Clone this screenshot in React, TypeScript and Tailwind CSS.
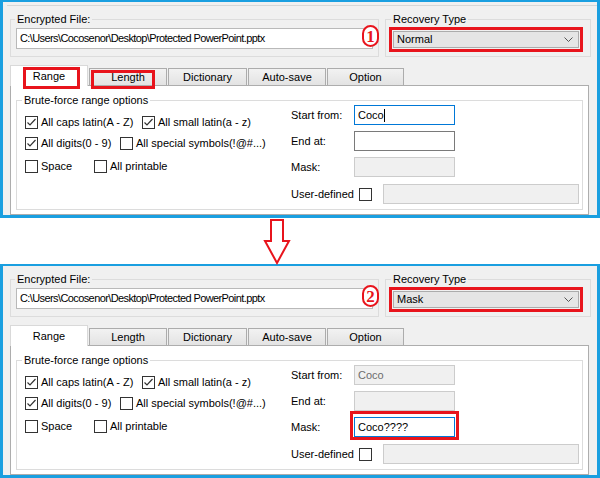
import React from 'react';

type Mode = 'normal' | 'focus' | 'disabled';

function Check({ checked }: { checked?: boolean }) {
  return (
    <span className="w-[13px] h-[13px] border border-[#333333] bg-white flex items-center justify-center shrink-0">
      {checked && (
        <svg width="11" height="11" viewBox="0 0 11 11">
          <path d="M1.5 5.5 L4 8 L9.5 2" fill="none" stroke="#333333" strokeWidth="1.2" />
        </svg>
      )}
    </span>
  );
}

function CheckItem({ label, checked, className }: { label: string; checked?: boolean; className?: string }) {
  return (
    <div className={`flex items-center gap-[3px] whitespace-nowrap ${className ?? ''}`}>
      <Check checked={checked} />
      <span>{label}</span>
    </div>
  );
}

function Field({ mode, value, caret }: { mode: Mode; value?: string; caret?: boolean }) {
  const look =
    mode === 'focus'
      ? 'border-[#0078d7] bg-white text-black'
      : mode === 'disabled'
        ? 'border-[#cccccc] bg-[#f0f0f0] text-[#6d6d6d]'
        : 'border-[#7a7a7a] bg-white text-black';
  return (
    <div className={`w-[101px] h-[20px] border flex items-center pl-[3px] ${look}`}>
      {value}
      {caret && <span className="w-px h-[13px] bg-black" />}
    </div>
  );
}

function RedBox({ className }: { className: string }) {
  return <div className={`absolute border-[3px] border-[#e8141c] pointer-events-none ${className}`} />;
}

function Tab({ label, selected, width, children }: { label: string; selected?: boolean; width: string; children?: React.ReactNode }) {
  if (selected) {
    return (
      <div className={`relative ${width} h-[21px] mb-[-1px] bg-white border-x border-t border-[#d9d9d9] flex items-center justify-center`}>
        {label}
        {children}
      </div>
    );
  }
  return (
    <div className={`relative ${width} h-[17px] ml-px bg-gradient-to-b from-[#f2f2f2] to-[#e3e3e3] border-x border-t border-[#acacac] flex items-center justify-center`}>
      {label}
      {children}
    </div>
  );
}

function Panel({ step }: { step: 1 | 2 }) {
  const first = step === 1;
  return (
    <div className={`border-x-[3px] border-t-2 border-b-[3px] border-[#1a9fe0] bg-[#f0f0f0] ${first ? 'pt-[3px]' : 'pt-[7px]'}`}>
      {first && <div className="h-px bg-[#d6d6d6] ml-[4px] mb-[7px]" />}

      <div className="flex ml-[7px] h-[44px]">
        <div className="relative">
          <fieldset className="w-[369px] h-[44px] border border-[#dcdcdc]">
            <legend className="ml-[4px] px-[2px] leading-[12px]">Encrypted File:</legend>
            <div className="ml-[5px] mt-[3px] w-[357px] h-[21px] border border-[#b9b9b9] bg-white flex items-center pl-[3px] tracking-[-0.6px]">
              {'C:\\Users\\Cocosenor\\Desktop\\Protected PowerPoint.pptx'}
            </div>
          </fieldset>
          <div className="absolute left-[352px] top-[12px] w-[17px] h-[22px] rounded-full border-2 border-[#e8141c] bg-white text-[#e8141c] font-['Liberation_Serif',serif] font-bold text-[17px] leading-none flex items-center justify-center">
            {step}
          </div>
        </div>
        <fieldset className="ml-[6px] w-[206px] h-[44px] border border-[#dcdcdc]">
          <legend className="ml-[5px] px-[2px] leading-[12px]">Recovery Type</legend>
          <div className="ml-[3px] mt-[2px] w-[194px] h-[25px] border-[3px] border-[#e8141c] p-px">
            <div className="h-full border border-[#acacac] bg-[#e5e5e5] flex items-center justify-between pl-[3px] pr-[5px]">
              <span>{first ? 'Normal' : 'Mask'}</span>
              <svg width="9" height="5" viewBox="0 0 9 5">
                <path d="M0.5 0.5 L4.5 4.5 L8.5 0.5" fill="none" stroke="#555555" strokeWidth="1" />
              </svg>
            </div>
          </div>
        </fieldset>
      </div>

      <div className="flex items-end ml-[7px] mt-[8px] h-[20px] relative z-10">
        <Tab label="Range" selected width="w-[78px]">
          {first && <RedBox className="left-[12px] top-[1px] w-[57px] h-[22px]" />}
        </Tab>
        <Tab label="Length" width="w-[78px]">
          {first && <RedBox className="left-[1px] top-[1px] w-[64px] h-[19px]" />}
        </Tab>
        <Tab label="Dictionary" width="w-[79px]" />
        <Tab label="Auto-save" width="w-[78px]" />
        <Tab label="Option" width="w-[77px]" />
      </div>

      <div className="ml-[7px] w-[579px] h-[130px] border border-[#adadad] bg-white">
        <fieldset className="ml-[5px] mt-[8px] w-[567px] h-[116px] border border-[#dcdcdc]">
          <legend className="ml-[5px] px-[2px] leading-[12px]">Brute-force range options</legend>
          <div className="flex">
            <div className="w-[274px] pl-[8px] flex flex-col">
              <div className="flex h-[13px] mt-[10px]">
                <CheckItem label="All caps latin(A - Z)" checked className="w-[117px]" />
                <CheckItem label="All small latin(a - z)" checked />
              </div>
              <div className="flex h-[13px] mt-[8px]">
                <CheckItem label="All digits(0 - 9)" checked className="w-[95px]" />
                <CheckItem label="All special symbols(!@#...)" />
              </div>
              <div className="flex h-[13px] mt-[10px]">
                <CheckItem label="Space" className="w-[69px]" />
                <CheckItem label="All printable" />
              </div>
            </div>
            <div className="flex flex-col mt-[-1px]">
              <div className="flex items-center h-[20px]">
                <span className="w-[63px]">Start from:</span>
                <Field mode={first ? 'focus' : 'disabled'} value="Coco" caret={first} />
              </div>
              <div className="flex items-center h-[20px] mt-[6px]">
                <span className="w-[63px]">End at:</span>
                <Field mode={first ? 'normal' : 'disabled'} />
              </div>
              <div className="flex items-center h-[20px] mt-[6px]">
                <span className="w-[63px]">Mask:</span>
                <div className="relative">
                  <Field mode={first ? 'disabled' : 'focus'} value={first ? '' : 'Coco????'} />
                  {!first && <RedBox className="-left-[4px] -top-[6px] w-[109px] h-[29px]" />}
                </div>
              </div>
              <div className="flex items-center h-[20px] mt-[7px]">
                <span className="w-[68px]">User-defined</span>
                <Check />
                <div className="ml-[11px] w-[196px] h-[20px] border border-[#cccccc] bg-[#f0f0f0]" />
              </div>
            </div>
          </div>
        </fieldset>
      </div>
    </div>
  );
}

export default function App() {
  return (
    <div className="w-[600px] h-[478px] bg-white overflow-hidden font-['Liberation_Sans',Arial,sans-serif] text-[11px] text-black">
      <Panel step={1} />
      <div className="h-[46px] flex">
        <svg className="ml-[263px] mt-[1px]" width="28" height="46" viewBox="0 0 28 46">
          <polygon points="8,1 20,1 20,22 26,22 14,44 2,22 8,22" fill="white" stroke="#e8141c" strokeWidth="2" />
        </svg>
      </div>
      <Panel step={2} />
    </div>
  );
}
